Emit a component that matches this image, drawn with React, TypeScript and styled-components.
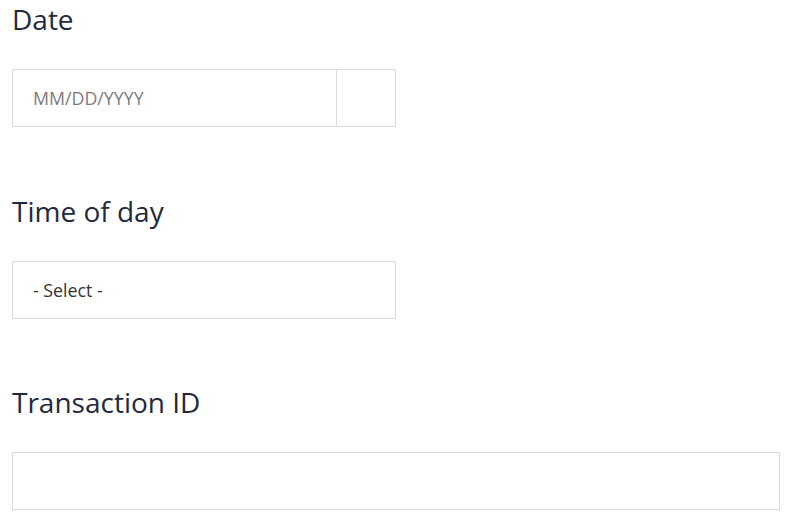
import React from "react";
import styled, { createGlobalStyle } from "styled-components";

const Global = createGlobalStyle`
  html, body { margin: 0; padding: 0; background: #fff; }
  body { font-family: "Open Sans", "Noto Sans", sans-serif; }
`;

const Page = styled.div`
  padding: 0 20px 0 12px;
  display: flex;
  flex-direction: column;
  gap: 64.5px;
`;

const Field = styled.div`
  display: flex;
  flex-direction: column;
`;

const Label = styled.div`
  font-size: 28px;
  line-height: 38px;
  color: #1f2a3c;
  margin: 0 0 31px;
`;

const Box = styled.div<{ $wide?: boolean }>`
  box-sizing: border-box;
  width: ${(p) => (p.$wide ? "768px" : "384px")};
  height: 58px;
  border: 1px solid #dadde0;
  display: flex;
  align-items: stretch;
  background: #fff;
`;

const Text = styled.div<{ $muted?: boolean }>`
  flex: 1;
  display: flex;
  align-items: center;
  padding-left: 20px;
  font-size: 17.8px;
  color: ${(p) => (p.$muted ? "#7a7a7a" : "#333")};
`;

const Addon = styled.div`
  width: 58px;
  border-left: 1px solid #dadde0;
`;

export default function App() {
  return (
    <>
      <Global />
      <Page>
        <Field>
          <Label>Date</Label>
          <Box>
            <Text $muted>MM/DD/YYYY</Text>
            <Addon />
          </Box>
        </Field>
        <Field>
          <Label>Time of day</Label>
          <Box>
            <Text>- Select -</Text>
          </Box>
        </Field>
        <Field>
          <Label>Transaction ID</Label>
          <Box $wide>
            <Text />
          </Box>
        </Field>
      </Page>
    </>
  );
}
